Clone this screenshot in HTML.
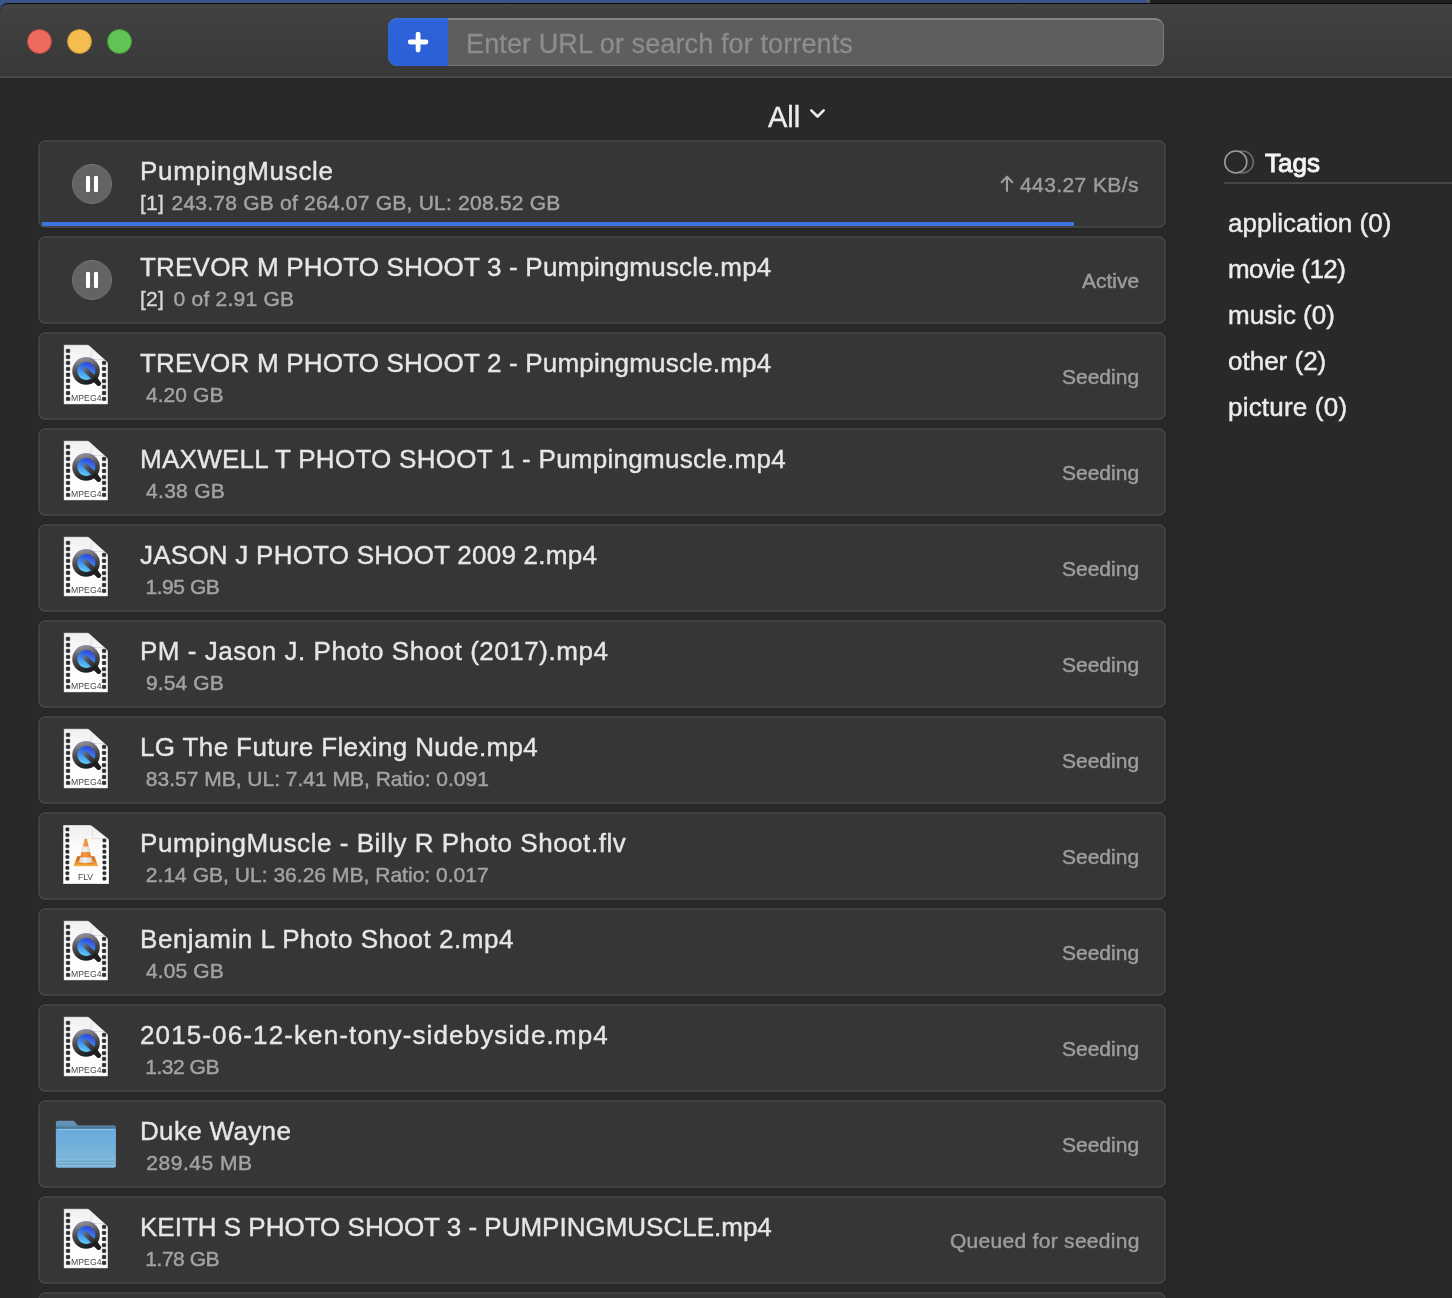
<!DOCTYPE html>
<html><head><meta charset="utf-8">
<style>
*{box-sizing:border-box;margin:0;padding:0}
html,body{width:1452px;height:1298px;overflow:hidden;background:#292929;font-family:"Liberation Sans",sans-serif}
.abs{position:absolute}
#strip{position:absolute;left:0;top:0;width:1452px;height:4px;background:#1d1d1d;overflow:visible}
#titlebar{position:absolute;left:0;top:3px;width:1452px;height:73px;background:linear-gradient(#424242,#383838);border-top:1px solid #0c0c0c;border-top-left-radius:8px}
#sep{position:absolute;left:0;top:76px;width:1452px;height:2px;background:#4a4a4a}
.tl{position:absolute;top:29px;width:25px;height:25px;border-radius:50%}
.search{position:absolute;left:388px;top:18px;width:776px;height:48px;border-radius:9px;background:#5e5e5e;border:1.5px solid #7a7a7a;border-top:2px solid #878787;border-bottom-color:#767676;overflow:hidden}
.plus{position:absolute;left:-2px;top:-2px;width:62px;height:50px;background:#2d62d9}
.ph{will-change:transform;-webkit-text-stroke:0.3px #8d8d8d;letter-spacing:0.12px;position:absolute;left:77px;top:11.3px;line-height:27px;font-size:27px;color:#8d8d8d;white-space:pre}
.all{will-change:transform;-webkit-text-stroke:0.4px #ececec;position:absolute;left:768px;top:103px;font-size:29px;line-height:29px;color:#ececec}
.card{position:absolute;left:38px;width:1128px;height:88px;background:#363636;border:2px solid #424242;border-radius:7px;box-shadow:0 0 2px 1px rgba(0,0,0,0.12)}
.card svg{position:absolute;left:-2px;top:-2px;will-change:transform}
.t1{will-change:transform;-webkit-text-stroke:0.4px #e6e6e6;position:absolute;left:100px;top:15.7px;font-size:26px;line-height:26px;color:#e6e6e6;white-space:pre;}
.t2{will-change:transform;-webkit-text-stroke:0.45px #a3a3a3;position:absolute;left:100px;top:50.2px;font-size:21px;line-height:21px;color:#a3a3a3;white-space:pre;}
.t2 b{font-weight:normal;color:#d8d8d8;-webkit-text-stroke:0.35px #d8d8d8}
.st{will-change:transform;-webkit-text-stroke:0.45px #9d9d9d;position:absolute;right:24.8px;top:32.2px;font-size:21px;line-height:21px;color:#9d9d9d;white-space:pre}
.pause{position:absolute;left:32px;top:21.8px;width:40px;height:40px;border-radius:50%;background:#636363;border:1px solid #737373}
.pause:before,.pause:after{content:"";position:absolute;top:11.2px;width:4.3px;height:16px;background:#fff;border-radius:1px}
.pause:before{left:12.8px}.pause:after{left:20.9px}
.prog{position:absolute;left:2px;top:80px;width:1032px;height:4px;background:#3e73e4}
.side{will-change:transform;-webkit-text-stroke:0.45px #ececec;position:absolute;left:1228px;font-size:26px;line-height:26px;color:#ececec;white-space:pre}
</style></head><body>
<div id="strip"><div class="abs" style="left:0;top:0;width:1147px;height:3px;background:#3b5488"></div><div class="abs" style="left:0;top:0;width:14px;height:14px;background:#3b5488"></div><div class="abs" style="left:1147px;top:0;width:3px;height:3px;background:#5c5c5c"></div></div>
<div id="titlebar"></div>
<div class="tl" style="left:27px;background:#ed6a5e;border:1px solid #b84a40"></div>
<div class="tl" style="left:67px;background:#f4be4f;border:1px solid #c0902f"></div>
<div class="tl" style="left:107px;background:#61c454;border:1px solid #3f9a35"></div>
<div class="search"><div class="ph">Enter URL or search for torrents</div></div>
<div class="abs" style="left:388px;top:18px;width:60px;height:48px;background:linear-gradient(#3a6ee0,#2d62d9 8%,#2c60d6);border-radius:9px 0 0 9px"></div>
<svg class="abs" style="left:0;top:0" width="460" height="70"><rect x="407.8" y="39.6" width="20.6" height="4.8" rx="2.4" fill="#fff"/><rect x="415.7" y="31.7" width="4.8" height="20.7" rx="2.4" fill="#fff"/></svg>
<div id="sep"></div>
<div class="all">All</div>
<svg class="abs" style="left:805px;top:104px" width="24" height="20"><path d="M6.3 6.3l6.2 6.2 6.2-6.2" fill="none" stroke="#ececec" stroke-width="2.6" stroke-linecap="round" stroke-linejoin="round"/></svg>
<svg class="abs" style="left:1220px;top:146px" width="40" height="32"><circle cx="22.3" cy="16" r="11" fill="none" stroke="#6b6b6b" stroke-width="1.6"/><circle cx="15.8" cy="16" r="11" fill="#292929" stroke="#9c9c9c" stroke-width="1.6"/></svg>
<div class="side" style="left:1265px;top:149.7px;color:#f4f4f4;-webkit-text-stroke:1px #f4f4f4">Tags</div>
<div class="abs" style="left:1224px;top:182px;width:228px;height:2px;background:#474747"></div>
<div class="side" style="top:209.7px">application (0)</div>
<div class="side" style="top:255.7px;letter-spacing:-0.55px">movie (12)</div>
<div class="side" style="top:301.7px">music (0)</div>
<div class="side" style="top:347.7px">other (2)</div>
<div class="side" style="top:393.7px;letter-spacing:0.2px">picture (0)</div>
<svg width="0" height="0" style="position:absolute">
<defs>
<linearGradient id="qring" x1="0.3" y1="0" x2="0.5" y2="1"><stop offset="0" stop-color="#9a9aa6"/><stop offset="0.45" stop-color="#505055"/><stop offset="1" stop-color="#1a1a1a"/></linearGradient>
<linearGradient id="qblue" x1="0.6" y1="0" x2="0.3" y2="1"><stop offset="0" stop-color="#2a45e0"/><stop offset="0.45" stop-color="#3880ee"/><stop offset="1" stop-color="#64d4fa"/></linearGradient>
<linearGradient id="qtail" gradientUnits="userSpaceOnUse" x1="46" y1="36" x2="58.5" y2="48.5"><stop offset="0" stop-color="#6a7482"/><stop offset="0.5" stop-color="#3e3e42"/><stop offset="1" stop-color="#222"/></linearGradient>
<linearGradient id="page" x1="0" y1="0" x2="0" y2="1"><stop offset="0" stop-color="#eeeeee"/><stop offset="0.35" stop-color="#fbfbfb"/><stop offset="1" stop-color="#ffffff"/></linearGradient>
<linearGradient id="fbody" x1="0" y1="0" x2="0" y2="1"><stop offset="0" stop-color="#68abdc"/><stop offset="1" stop-color="#80b7d8"/></linearGradient><linearGradient id="ftab" x1="0" y1="0" x2="0" y2="1"><stop offset="0" stop-color="#6595b8"/><stop offset="1" stop-color="#55839f"/></linearGradient>
<linearGradient id="cone" x1="0" y1="0" x2="1" y2="0"><stop offset="0" stop-color="#dc6a1a"/><stop offset="0.45" stop-color="#f49a3c"/><stop offset="1" stop-color="#d0601a"/></linearGradient>
<linearGradient id="stripe" x1="0" y1="0" x2="1" y2="0"><stop offset="0" stop-color="#c8c8c8"/><stop offset="0.45" stop-color="#f2f2f2"/><stop offset="1" stop-color="#bdbdbd"/></linearGradient>
<linearGradient id="cbase" x1="0" y1="0" x2="0" y2="1"><stop offset="0" stop-color="#d0601c"/><stop offset="0.6" stop-color="#ec8a2a"/><stop offset="1" stop-color="#f6b848"/></linearGradient>
<clipPath id="coneclip"><path d="M46.7 27.3Q47.8 25.6 48.9 27.3L55 51.8Q47.8 53.8 40.6 51.8Z"/></clipPath>
<symbol id="mp4" viewBox="0 0 100 88">
 <path d="M25.8 12.8H49Q50.6 12.8 51.8 13.9L69 29.6Q69.9 30.6 69.9 32V72.3H25.8Z" fill="url(#page)" stroke="#1a1a1a" stroke-opacity="0.35" stroke-width="0.6"/>
 <path d="M53.3 17.5V27.5H66" fill="none" stroke="#cfcfcf" stroke-width="0.6"/>
 <g fill="#2a2a2a" stroke="#141414" stroke-width="0.5"><rect x="28.3" y="17.2" width="3.5" height="3.4" rx="0.5"/><rect x="28.3" y="23.3" width="3.5" height="3.4" rx="0.5"/><rect x="28.3" y="29.2" width="3.5" height="3.4" rx="0.5"/><rect x="28.3" y="35.2" width="3.5" height="3.4" rx="0.5"/><rect x="28.3" y="41.1" width="3.5" height="3.4" rx="0.5"/><rect x="28.3" y="47.1" width="3.5" height="3.4" rx="0.5"/><rect x="28.3" y="53.2" width="3.5" height="3.4" rx="0.5"/><rect x="28.3" y="59.3" width="3.5" height="3.4" rx="0.5"/><rect x="28.3" y="65.2" width="3.5" height="3.4" rx="0.5"/><rect x="64.3" y="29.2" width="3.5" height="3.4" rx="0.5"/><rect x="64.3" y="35.2" width="3.5" height="3.4" rx="0.5"/><rect x="64.3" y="41.3" width="3.5" height="3.4" rx="0.5"/><rect x="64.3" y="47.4" width="3.5" height="3.4" rx="0.5"/><rect x="64.3" y="53.2" width="3.5" height="3.4" rx="0.5"/><rect x="64.3" y="59.3" width="3.5" height="3.4" rx="0.5"/><rect x="64.3" y="65.2" width="3.5" height="3.4" rx="0.5"/></g>
 <circle cx="48.05" cy="38.9" r="13.8" fill="url(#qring)"/>
 <circle cx="48.3" cy="39" r="9" fill="url(#qblue)"/>
 <path d="M47.9 37.9L58.5 48.5" stroke="url(#qtail)" stroke-width="5" stroke-linecap="round"/><path d="M57.2 47.9L60.7 51.4" stroke="#1e1e1e" stroke-width="5" stroke-linecap="round"/>
 <text x="48.3" y="68.7" font-family="Liberation Sans" font-size="8.6" fill="#4a4a4a" text-anchor="middle" textLength="30.5" lengthAdjust="spacingAndGlyphs">MPEG4</text>
</symbol>
<symbol id="flv" viewBox="0 0 100 88">
 <path d="M25.1 13H51.5Q53 13 54.2 14L70 26.6Q71 27.6 71 29V72H25.1Z" fill="url(#page)" stroke="#1a1a1a" stroke-opacity="0.35" stroke-width="0.6"/>
 <path d="M54.5 16.5V26.5H67.5" fill="none" stroke="#d2d2d2" stroke-width="0.6"/>
 <g fill="#2e2e2e" stroke="#181818" stroke-width="0.5"><rect x="27.8" y="15.8" width="3.2" height="3.1" rx="0.7"/><rect x="27.8" y="21.5" width="3.2" height="3.1" rx="0.7"/><rect x="27.8" y="26.9" width="3.2" height="3.1" rx="0.7"/><rect x="27.8" y="32.7" width="3.2" height="3.1" rx="0.7"/><rect x="27.8" y="38.1" width="3.2" height="3.1" rx="0.7"/><rect x="27.8" y="43.5" width="3.2" height="3.1" rx="0.7"/><rect x="27.8" y="48.9" width="3.2" height="3.1" rx="0.7"/><rect x="27.8" y="54.3" width="3.2" height="3.1" rx="0.7"/><rect x="27.8" y="59.7" width="3.2" height="3.1" rx="0.7"/><rect x="27.8" y="65.1" width="3.2" height="3.1" rx="0.7"/><rect x="64.8" y="26.9" width="3.2" height="3.1" rx="0.7"/><rect x="64.8" y="32.7" width="3.2" height="3.1" rx="0.7"/><rect x="64.8" y="38.1" width="3.2" height="3.1" rx="0.7"/><rect x="64.8" y="43.5" width="3.2" height="3.1" rx="0.7"/><rect x="64.8" y="48.9" width="3.2" height="3.1" rx="0.7"/><rect x="64.8" y="54.3" width="3.2" height="3.1" rx="0.7"/><rect x="64.8" y="59.7" width="3.2" height="3.1" rx="0.7"/><rect x="64.8" y="65.1" width="3.2" height="3.1" rx="0.7"/></g>
 <path d="M39.2 44.2H56.4L60.2 54.3H35.5Z" fill="url(#cbase)"/>
 <g clip-path="url(#coneclip)"><rect x="38" y="24" width="20" height="32" fill="url(#cone)"/><rect x="38" y="34.5" width="20" height="5.6" fill="url(#stripe)"/><rect x="38" y="45.4" width="20" height="5.4" fill="url(#stripe)"/></g>
 <text x="47.5" y="68.1" font-family="Liberation Sans" font-size="8.6" fill="#444" text-anchor="middle">FLV</text>
</symbol>
<symbol id="folder" viewBox="0 0 100 88">
 <path d="M17.9 22.7Q17.9 20.7 19.9 20.7H34.6Q36 20.7 36.8 21.8L39.8 25.4H75.9Q77.9 25.4 77.9 27.4V40H17.9Z" fill="url(#ftab)"/>
 <path d="M17.9 26.4H77.9V30H17.9Z" fill="#4c7a9a"/>
 <path d="M17.9 30.9Q17.9 28.9 19.9 28.9H75.9Q77.9 28.9 77.9 30.9V65.8Q77.9 67.8 75.9 67.8H19.9Q17.9 67.8 17.9 65.8Z" fill="url(#fbody)"/>
 <path d="M18.5 29.4H77.3" stroke="#92cdf0" stroke-width="0.9"/>
 <path d="M17.9 59.8H77.9M17.9 62.6H77.9M17.9 65.3H77.9" stroke="#8cc3e2" stroke-width="0.7"/>
 <path d="M17.9 61.2H77.9M17.9 64H77.9" stroke="#6898b8" stroke-width="0.7"/>
</symbol>
</defs></svg>
<div class="card" style="top:140px"><div class="pause"></div><div class="t1" style="letter-spacing:0.667px">PumpingMuscle</div><div class="t2" style="letter-spacing:0.230px"><b style="display:inline-block;width:31.5px">[1]</b>243.78 GB of 264.07 GB, UL: 208.52 GB</div><div class="st" style="letter-spacing:0.41px"><svg style="position:absolute;left:-21px;top:-1px" width="16" height="20"><path d="M8 3.8V18M2.7 9.2L8 3.8l5.3 5.4" fill="none" stroke="#9d9d9d" stroke-width="2.1" stroke-linecap="round" stroke-linejoin="round"/></svg>443.27 KB/s</div><div class="prog"></div></div>
<div class="card" style="top:236px"><div class="pause"></div><div class="t1" style="letter-spacing:0.198px">TREVOR M PHOTO SHOOT 3 - Pumpingmuscle.mp4</div><div class="t2" style="letter-spacing:0.240px"><b style="display:inline-block;width:33.5px">[2]</b>0 of 2.91 GB</div><div class="st">Active</div></div>
<div class="card" style="top:332px"><svg width="100" height="88"><use href="#mp4" width="100" height="88"/></svg><div class="t1" style="letter-spacing:0.195px">TREVOR M PHOTO SHOOT 2 - Pumpingmuscle.mp4</div><div class="t2" style="letter-spacing:0.083px"> 4.20 GB</div><div class="st">Seeding</div></div>
<div class="card" style="top:428px"><svg width="100" height="88"><use href="#mp4" width="100" height="88"/></svg><div class="t1" style="letter-spacing:0.269px">MAXWELL T PHOTO SHOOT 1 - Pumpingmuscle.mp4</div><div class="t2" style="letter-spacing:0.267px"> 4.38 GB</div><div class="st">Seeding</div></div>
<div class="card" style="top:524px"><svg width="100" height="88"><use href="#mp4" width="100" height="88"/></svg><div class="t1" style="letter-spacing:0.241px">JASON J PHOTO SHOOT 2009 2.mp4</div><div class="t2" style="letter-spacing:-0.433px"> 1.95 GB</div><div class="st">Seeding</div></div>
<div class="card" style="top:620px"><svg width="100" height="88"><use href="#mp4" width="100" height="88"/></svg><div class="t1" style="letter-spacing:0.526px">PM - Jason J. Photo Shoot (2017).mp4</div><div class="t2" style="letter-spacing:0.117px"> 9.54 GB</div><div class="st">Seeding</div></div>
<div class="card" style="top:716px"><svg width="100" height="88"><use href="#mp4" width="100" height="88"/></svg><div class="t1" style="letter-spacing:0.379px">LG The Future Flexing Nude.mp4</div><div class="t2" style="letter-spacing:-0.006px"> 83.57 MB, UL: 7.41 MB, Ratio: 0.091</div><div class="st">Seeding</div></div>
<div class="card" style="top:812px"><svg width="100" height="88"><use href="#flv" width="100" height="88"/></svg><div class="t1" style="letter-spacing:0.537px">PumpingMuscle - Billy R Photo Shoot.flv</div><div class="t2" style="letter-spacing:0.024px"> 2.14 GB, UL: 36.26 MB, Ratio: 0.017</div><div class="st">Seeding</div></div>
<div class="card" style="top:908px"><svg width="100" height="88"><use href="#mp4" width="100" height="88"/></svg><div class="t1" style="letter-spacing:0.537px">Benjamin L Photo Shoot 2.mp4</div><div class="t2" style="letter-spacing:0.117px"> 4.05 GB</div><div class="st">Seeding</div></div>
<div class="card" style="top:1004px"><svg width="100" height="88"><use href="#mp4" width="100" height="88"/></svg><div class="t1" style="letter-spacing:1.121px">2015-06-12-ken-tony-sidebyside.mp4</div><div class="t2" style="letter-spacing:-0.500px"> 1.32 GB</div><div class="st">Seeding</div></div>
<div class="card" style="top:1100px"><svg width="100" height="88"><use href="#folder" width="100" height="88"/></svg><div class="t1" style="letter-spacing:0.333px">Duke Wayne</div><div class="t2" style="letter-spacing:0.512px"> 289.45 MB</div><div class="st">Seeding</div></div>
<div class="card" style="top:1196px"><svg width="100" height="88"><use href="#mp4" width="100" height="88"/></svg><div class="t1" style="letter-spacing:0.000px">KEITH S PHOTO SHOOT 3 - PUMPINGMUSCLE.mp4</div><div class="t2" style="letter-spacing:-0.483px"> 1.78 GB</div><div class="st" style="letter-spacing:0.29px">Queued for seeding</div></div>
<div class="card" style="top:1292px"></div>
</body></html>
